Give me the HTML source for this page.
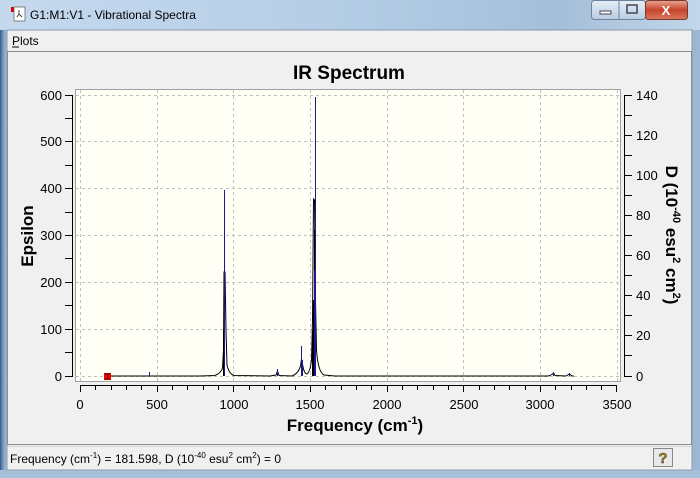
<!DOCTYPE html>
<html><head><meta charset="utf-8"><style>
html,body{margin:0;padding:0;width:700px;height:478px;overflow:hidden;background:#a9c3dd;font-family:"Liberation Sans",sans-serif}
</style></head><body>
<svg width="700" height="478" viewBox="0 0 700 478" xmlns="http://www.w3.org/2000/svg" font-family="Liberation Sans, sans-serif">
<defs>
<linearGradient id="tb" x1="0" y1="0" x2="1" y2="0">
<stop offset="0" stop-color="#c5d9ee"/><stop offset="0.5" stop-color="#b4cde6"/><stop offset="0.8" stop-color="#a5bfd9"/><stop offset="1" stop-color="#c3d6ea"/></linearGradient>
<linearGradient id="cl" x1="0" y1="0" x2="0" y2="1"><stop offset="0" stop-color="#e8a592"/><stop offset="0.5" stop-color="#c7452c"/><stop offset="1" stop-color="#d9795e"/></linearGradient>
<linearGradient id="bt" x1="0" y1="0" x2="0" y2="1"><stop offset="0" stop-color="#e5eef7"/><stop offset="1" stop-color="#b9cde2"/></linearGradient>
<linearGradient id="lb" x1="0" y1="0" x2="1" y2="0"><stop offset="0" stop-color="#3a5a86"/><stop offset="0.5" stop-color="#7f9fc4"/><stop offset="1" stop-color="#a7c0da"/></linearGradient>
</defs>
<rect x="0" y="0" width="700" height="478" fill="url(#tb)"/>
<rect x="0" y="30" width="7" height="448" fill="url(#lb)"/>
<rect x="692" y="30" width="8" height="448" fill="#9bb7d4"/>
<rect x="0" y="470" width="700" height="8" fill="#a8c1db"/>
<!-- title -->
<rect x="11" y="7" width="5" height="5" fill="#d00"/>
<rect x="14" y="7" width="11" height="14" fill="#fff" stroke="#666" stroke-width="0.8"/>
<path d="M19 10 L19 14 M17 17 L19 14 L22 17" stroke="#444" fill="none"/>
<text x="30" y="19" font-size="12" fill="#000">G1:M1:V1 - Vibrational Spectra</text>
<!-- buttons -->
<rect x="591.5" y="0.5" width="54" height="19" rx="3" fill="url(#bt)" stroke="#6d839c"/>
<line x1="619" y1="1" x2="619" y2="19" stroke="#6d839c"/>
<rect x="600" y="11" width="11" height="3" fill="#fff" stroke="#445"/>
<rect x="627" y="5" width="10" height="8" fill="none" stroke="#445" stroke-width="1.5"/>
<rect x="645.5" y="0.5" width="42" height="19" rx="3" fill="url(#cl)" stroke="#7a3b2c"/>
<text x="666" y="15" font-size="13" font-weight="bold" fill="#fff" text-anchor="middle">X</text>
<!-- client -->
<rect x="7" y="30" width="685" height="440" fill="#f0f0f0" stroke="#8a9aab"/>
<text x="12" y="45" font-size="12" fill="#000">Plots</text>
<line x1="12" y1="47" x2="19" y2="47" stroke="#000"/>
<rect x="7.5" y="51.5" width="684" height="393" fill="#f0f0f0" stroke="#8c8c8c"/>
<!-- title -->
<text x="349" y="79" font-size="19" font-weight="bold" text-anchor="middle">IR Spectrum</text>
<!-- plot frame -->
<rect x="75.5" y="89.5" width="545" height="292" fill="#fffff6" stroke="#a0a0a0"/>
<g stroke="#c0c0c0" stroke-dasharray="3,3" stroke-width="1">
<line x1="76" y1="376.5" x2="620" y2="376.5"/><line x1="76" y1="329.5" x2="620" y2="329.5"/><line x1="76" y1="282.5" x2="620" y2="282.5"/><line x1="76" y1="235.5" x2="620" y2="235.5"/><line x1="76" y1="188.5" x2="620" y2="188.5"/><line x1="76" y1="141.5" x2="620" y2="141.5"/><line x1="76" y1="95.5" x2="620" y2="95.5"/>
<line x1="80.5" y1="90" x2="80.5" y2="381"/><line x1="157.5" y1="90" x2="157.5" y2="381"/><line x1="233.5" y1="90" x2="233.5" y2="381"/><line x1="310.5" y1="90" x2="310.5" y2="381"/><line x1="387.5" y1="90" x2="387.5" y2="381"/><line x1="463.5" y1="90" x2="463.5" y2="381"/><line x1="540.5" y1="90" x2="540.5" y2="381"/><line x1="617.5" y1="90" x2="617.5" y2="381"/>
</g>
<!-- left axis -->
<g stroke="#000">
<line x1="72.5" y1="95" x2="72.5" y2="377"/>
<path d="M65 376.5h8M65 352.5h8M65 329.5h8M65 305.5h8M65 282.5h8M65 258.5h8M65 235.5h8M65 212.5h8M65 188.5h8M65 165.5h8M65 141.5h8M65 118.5h8M65 95.5h8"/>
<line x1="624.5" y1="95" x2="624.5" y2="377"/>
<path d="M624 376.5h8M624 355.5h8M624 335.5h8M624 315.5h8M624 295.5h8M624 275.5h8M624 255.5h8M624 235.5h8M624 215.5h8M624 195.5h8M624 175.5h8M624 155.5h8M624 135.5h8M624 115.5h8M624 95.5h8"/>
<line x1="80" y1="385.5" x2="617" y2="385.5"/>
<path d="M80.5 385v7M95.5 385v5M111.5 385v5M126.5 385v5M141.5 385v5M157.5 385v7M172.5 385v5M187.5 385v5M203.5 385v5M218.5 385v5M233.5 385v7M249.5 385v5M264.5 385v5M279.5 385v5M295.5 385v5M310.5 385v7M325.5 385v5M341.5 385v5M356.5 385v5M371.5 385v5M387.5 385v7M402.5 385v5M417.5 385v5M433.5 385v5M448.5 385v5M463.5 385v7M479.5 385v5M494.5 385v5M509.5 385v5M525.5 385v5M540.5 385v7M555.5 385v5M571.5 385v5M586.5 385v5M601.5 385v5M616.5 385v7"/>
</g>
<g font-size="13" text-anchor="end">
<text x="62" y="381">0</text><text x="62" y="334">100</text><text x="62" y="287">200</text><text x="62" y="240">300</text><text x="62" y="193">400</text><text x="62" y="146">500</text><text x="62" y="100">600</text>
</g>
<g font-size="13">
<text x="636" y="381">0</text><text x="636" y="340">20</text><text x="636" y="300">40</text><text x="636" y="260">60</text><text x="636" y="220">80</text><text x="636" y="180">100</text><text x="636" y="140">120</text><text x="636" y="100">140</text>
</g>
<g font-size="13" text-anchor="middle">
<text x="80" y="409">0</text><text x="157" y="409">500</text><text x="234" y="409">1000</text><text x="310" y="409">1500</text><text x="387" y="409">2000</text><text x="464" y="409">2500</text><text x="540" y="409">3000</text><text x="617" y="409">3500</text>
</g>
<text x="355" y="431" font-size="17" font-weight="bold" text-anchor="middle">Frequency (cm<tspan font-size="11" dy="-7">-1</tspan><tspan dy="7">)</tspan></text>
<text transform="translate(33,236) rotate(-90)" font-size="17" font-weight="bold" text-anchor="middle">Epsilon</text>
<text transform="translate(666,235) rotate(90)" font-size="17" font-weight="bold" text-anchor="middle">D (10<tspan font-size="11" dy="-7">-40</tspan><tspan dy="7"> esu</tspan><tspan font-size="11" dy="-7">2</tspan><tspan dy="7"> cm</tspan><tspan font-size="11" dy="-7">2</tspan><tspan dy="7">)</tspan></text>
<!-- spectrum -->
<path d="M107 376 L200 376 L215 375.5 Q221 373 222.5 368 L223.5 350 L224 272 L225 272 L226 330 L227 365 Q229 374 234 375.5 L270 376 L276 375 L277.5 371 L279 375.5 L292 376 Q298 374 300.5 366 L301.5 359 L302.5 364 Q304 374 307 374 Q310 372 311.5 360 L312.5 320 L313.5 199 L314.5 200 L315.5 300 L316.5 350 Q318 372 324 375 L335 376 L548 376 Q552 375 553.5 373 L555 375.5 L566 376 L569.5 374 L572 376 L574 376" fill="none" stroke="#000" stroke-width="1"/>
<path d="M313.5 300V376M314.5 230V376M312.5 330V376M223.5 330V376M224.5 340V376" stroke="#000" stroke-width="1"/>
<g stroke="#1a1a8c" stroke-width="1">
<line x1="149.5" y1="372" x2="149.5" y2="376"/>
<line x1="224.5" y1="190" x2="224.5" y2="376"/>
<line x1="277.5" y1="369" x2="277.5" y2="376"/>
<line x1="301.5" y1="346" x2="301.5" y2="376"/>
<line x1="302.5" y1="360" x2="302.5" y2="376"/>
<line x1="315.5" y1="97" x2="315.5" y2="376"/>
<line x1="314.5" y1="270" x2="314.5" y2="376"/>
<line x1="553.5" y1="372" x2="553.5" y2="376"/>
<line x1="569.5" y1="373" x2="569.5" y2="376"/>
</g>
<rect x="104" y="373" width="7" height="7" fill="#e00"/>
<path d="M104 373h7l-3.5 3.5zM104 380h7l-3.5-3.5z" fill="#900"/>
<!-- status -->
<line x1="8" y1="446.5" x2="691" y2="446.5" stroke="#d8d8d8"/>
<text x="10" y="463" font-size="12">Frequency (cm<tspan font-size="8" dy="-5">-1</tspan><tspan dy="5">) = 181.598, D (10</tspan><tspan font-size="8" dy="-5">-40</tspan><tspan dy="5"> esu</tspan><tspan font-size="8" dy="-5">2</tspan><tspan dy="5"> cm</tspan><tspan font-size="8" dy="-5">2</tspan><tspan dy="5">) = 0</tspan></text>
<rect x="653.5" y="448.5" width="19" height="18" fill="#e9e9e9" stroke="#888"/>
<text x="663" y="463" font-size="15" font-weight="bold" fill="#a08a3c" stroke="#4a3d10" stroke-width="0.5" text-anchor="middle">?</text>
</svg>
</body></html>
